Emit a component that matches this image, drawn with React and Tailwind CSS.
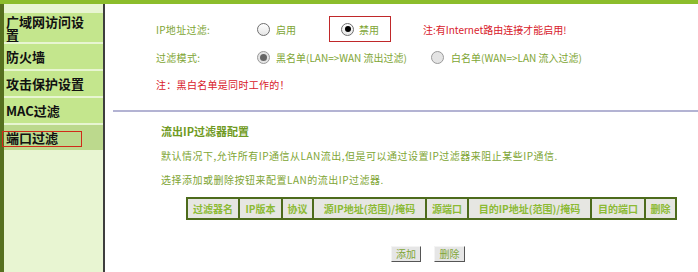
import React from 'react';

const font = { fontFamily: '"Noto Sans CJK SC", "Liberation Sans", sans-serif' };

const Radio = ({ checked, disabled }) => {
    if (disabled) {
        return (
            <span className="w-[13px] h-[13px] rounded-full border border-[#9a9a9a] bg-[#e4e4e4] flex items-center justify-center shrink-0">
                {checked && <span className="w-[7px] h-[7px] rounded-full bg-[#666]" />}
            </span>
        );
    }
    return (
        <span className="w-[13px] h-[13px] rounded-full border border-[#6f6f6f] bg-gradient-to-b from-white to-[#e6e6e6] flex items-center justify-center shrink-0">
            {checked && <span className="w-[6px] h-[6px] rounded-full bg-black" />}
        </span>
    );
};

const menuItems = [
    { label: '广域网访问设置', h: 'h-[29px]' },
    { label: '防火墙', h: 'h-[25px]' },
    { label: '攻击保护设置', h: 'h-[25px]' },
    { label: 'MAC过滤', h: 'h-[25px]' },
    { label: '端口过滤', h: 'h-[25px]', active: true },
];

const columns = [
    { label: '过滤器名', w: 'w-[50px]' },
    { label: 'IP版本', w: 'w-[41px]' },
    { label: '协议', w: 'w-[29px]' },
    { label: '源IP地址(范围)/掩码', w: 'w-[111px]' },
    { label: '源端口', w: 'w-[40px]' },
    { label: '目的IP地址(范围)/掩码', w: 'w-[121px]' },
    { label: '目的端口', w: 'w-[52px]' },
    { label: '删除', w: 'w-[29px]' },
];

export default function App() {
    return (
        <div className="w-[698px] h-[272px] overflow-hidden bg-white flex flex-col" style={font}>
            {/* top bar */}
            <div className="h-[4px] bg-[#8cbd2c] shrink-0" />

            <div className="flex flex-1">
                {/* Sidebar */}
                <aside className="w-[103px] border-l-[4px] border-[#56701f] bg-[#e8f5d2] flex flex-col pt-[9px] gap-[2px]">
                    {menuItems.map((item) => (
                        <div
                            key={item.label}
                            className={`relative ${item.h} flex items-center pl-[2px] ${item.active ? 'bg-[#bcd98d]' : 'bg-[#c4e68d]'}`}
                        >
                            <span className="w-[84px] text-[13px] leading-[13px] font-bold text-[#111]">
                                {item.label}
                            </span>
                            {item.active && (
                                <span className="absolute left-[-2px] top-[6px] w-[80px] h-[16px] border border-[#d02a1a]" />
                            )}
                        </div>
                    ))}
                </aside>

                <div className="w-[2px] bg-[#3e3e3e]" />

                {/* Main */}
                <main className="flex-1 flex flex-col text-[10px] text-[#80a534]">
                    <div className="mt-[12px] h-[26px] flex items-center pl-[51px]">
                        <span className="w-[101px] tracking-[0.3px]">IP地址过滤:</span>
                        <span className="w-[72px] flex items-center gap-[6px]">
                            <Radio />
                            <span>启用</span>
                        </span>
                        <span className="w-[62px] h-[26px] border border-[#c0282a] flex items-center pl-[11px] gap-[5px]">
                            <Radio checked />
                            <span>禁用</span>
                        </span>
                        <span className="ml-[32px] text-[#d8202a]">注:有Internet路由连接才能启用!</span>
                    </div>

                    <div className="mt-[5px] h-[20px] flex items-center pl-[51px]">
                        <span className="w-[101px] tracking-[0.3px]">过滤模式:</span>
                        <span className="w-[174px] flex items-center gap-[6px]">
                            <Radio checked disabled />
                            <span>黑名单(LAN=&gt;WAN 流出过滤)</span>
                        </span>
                        <span className="flex items-center gap-[7px]">
                            <Radio disabled />
                            <span>白名单(WAN=&gt;LAN 流入过滤)</span>
                        </span>
                    </div>

                    <div className="mt-[9px] h-[16px] flex items-center pl-[51px] text-[#d8202a] tracking-[0.3px]">
                        注：黑白名单是同时工作的！
                    </div>

                    <div className="mt-[18px] ml-[8px] h-[2px] bg-[#b3b3d3]" />

                    <div className="mt-[11px] h-[16px] flex items-center pl-[56px] text-[11px] font-bold text-[#6f9a22]">
                        流出IP过滤器配置
                    </div>
                    <div className="mt-[8px] h-[16px] flex items-center pl-[56px] tracking-[0.5px]">
                        默认情况下,允许所有IP通信从LAN流出,但是可以通过设置IP过滤器来阻止某些IP通信.
                    </div>
                    <div className="mt-[8px] h-[16px] flex items-center pl-[56px] tracking-[0.5px]">
                        选择添加或删除按钮来配置LAN的流出IP过滤器.
                    </div>

                    <div className="mt-[10px] ml-[81px] self-start flex gap-[2px] p-[2px] bg-[#4d6b1c]">
                        {columns.map((c) => (
                            <div
                                key={c.label}
                                className={`${c.w} h-[19px] bg-[#e6e6e2] flex items-center justify-center font-bold text-[#8cba34] whitespace-nowrap`}
                            >
                                {c.label}
                            </div>
                        ))}
                    </div>

                    <div className="mt-[26px] ml-[286px] flex gap-[13px]">
                        <button className="w-[30px] h-[16px] bg-[#e6e6e6] border border-[#f4f4f4] border-b-[#555] border-r-[#555] text-[10px] text-[#80a534] leading-none">
                            添加
                        </button>
                        <button className="w-[31px] h-[16px] bg-[#e6e6e6] border border-[#f4f4f4] border-b-[#555] border-r-[#555] text-[10px] text-[#80a534] leading-none">
                            删除
                        </button>
                    </div>
                </main>
            </div>
        </div>
    );
}
